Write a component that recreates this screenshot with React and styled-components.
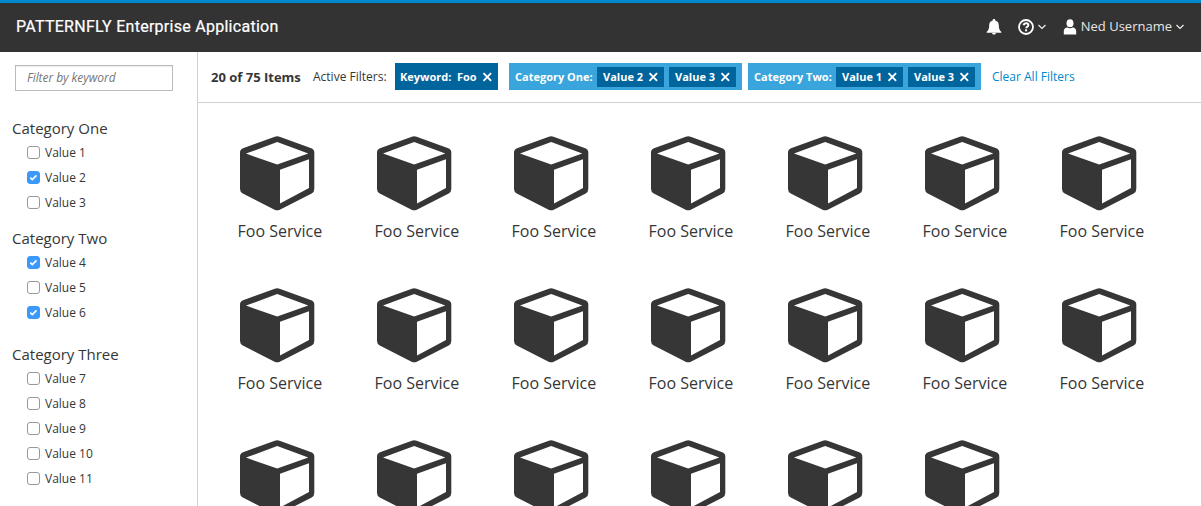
import React from "react";
import styled, { createGlobalStyle } from "styled-components";

const GlobalStyle = createGlobalStyle`
  *, *::before, *::after { box-sizing: border-box; }
  body {
    margin: 0;
    background: #fff;
    color: #363636;
    font-family: "Open Sans", "Noto Sans", sans-serif;
    font-size: 12px;
    overflow: hidden;
  }
`;

const Page = styled.div`
  display: flex;
  flex-direction: column;
  height: 506px;
  overflow: hidden;
`;

const Masthead = styled.header`
  display: flex;
  align-items: center;
  justify-content: space-between;
  flex: none;
  height: 52px;
  padding: 0 17px 2px 16px;
  border-top: 3px solid #0088ce;
  background: #333;
  color: #fff;
`;

const Brand = styled.h1`
  margin: 0;
  font: 400 16px/20px Roboto, sans-serif;
  letter-spacing: 0.27px;
  -webkit-text-stroke: 0.2px #fff;
  white-space: nowrap;
`;

const Utilities = styled.div`
  display: flex;
  align-items: center;
`;

const UtilityButton = styled.button`
  display: flex;
  align-items: center;
  gap: ${(p) => p.$gap || 0}px;
  margin: 0 0 0 ${(p) => p.$space || 0}px;
  padding: 0;
  border: 0;
  background: none;
  color: #e6e6e6;
  font: 13px/18px "Open Sans", sans-serif;
  white-space: nowrap;
`;

const UserName = styled.span`
  padding-bottom: 1px;
  line-height: 17px;
`;

const Body = styled.div`
  display: flex;
  flex: 1;
  min-height: 0;
`;

const Sidebar = styled.aside`
  flex: none;
  width: 198px;
  padding: 13px 0 0 12px;
  border-right: 1px solid #d1d1d1;
`;

const KeywordInput = styled.input`
  display: block;
  width: 158px;
  height: 26px;
  margin: 0 0 27px 3px;
  padding: 0 11px 1px;
  border: 1px solid #bbb;
  border-radius: 0;
  box-shadow: inset 0 1px 1px rgba(0, 0, 0, 0.075);
  font: 12px/18px "Open Sans", sans-serif;
  letter-spacing: -0.06px;
  &::placeholder {
    color: #767676;
    font-style: italic;
  }
`;

const Category = styled.section`
  margin-bottom: ${(p) => p.$after}px;
`;

const CategoryTitle = styled.h2`
  margin: 0;
  padding-bottom: 2px;
  font-size: 15px;
  font-weight: 400;
  line-height: 20px;
`;

const Option = styled.label`
  display: flex;
  align-items: center;
  gap: 5px;
  height: 25px;
  padding-left: 15px;
  line-height: 18px;
`;

const CheckBox = styled.span`
  display: flex;
  align-items: center;
  justify-content: center;
  width: 13px;
  height: 13px;
  border: 1px solid ${(p) => (p.$checked ? "#3b99fc" : "#999")};
  border-radius: 3px;
  background: ${(p) => (p.$checked ? "#3b99fc" : "#fff")};
`;

const Main = styled.main`
  flex: 1;
  min-width: 0;
`;

const Toolbar = styled.div`
  display: flex;
  align-items: center;
  height: 51px;
  padding: 0 0 1px 13px;
  border-bottom: 1px solid #d1d1d1;
  white-space: nowrap;
`;

const ResultCount = styled.strong`
  width: 102px;
  font-size: 13px;
  font-weight: 700;
`;

const FiltersLabel = styled.span`
  width: 82px;
`;

const FilterGroup = styled.div`
  display: flex;
  align-items: center;
  width: ${(p) => p.$width}px;
  height: 27px;
  margin-right: ${(p) => p.$after}px;
  padding-left: ${(p) => (p.$solid ? 5 : 6)}px;
  background: ${(p) => (p.$solid ? "#00659c" : "#39a5dc")};
  color: #fff;
  font-size: 11px;
  font-weight: 700;
`;

const FilterName = styled.span`
  width: ${(p) => p.$width}px;
`;

const FilterChip = styled.span`
  display: flex;
  align-items: center;
  justify-content: space-between;
  width: 67px;
  height: 20px;
  margin-right: 5px;
  padding: 0 6px;
  background: #00659c;
`;

const FilterValue = styled.span`
  width: 25px;
`;

const ClearLink = styled.a`
  color: #0088ce;
`;

const ServiceGrid = styled.div`
  display: grid;
  grid-template-columns: repeat(7, 137px);
  grid-auto-rows: 152px;
  padding: 33px 0 0 39.5px;
`;

const ServiceCard = styled.div`
  display: flex;
  flex-direction: column;
  align-items: flex-start;
`;

const ServiceIcon = styled.svg`
  display: block;
  margin-left: 2.5px;
`;

const ServiceName = styled.span`
  margin-top: 8px;
  font-size: 16px;
  line-height: 24px;
  white-space: nowrap;
`;

const BellIcon = () => (
  <svg width="16" height="16" viewBox="0 0 16 16" fill="#fff">
    <path d="M8 0c.9 0 1.300.5 1.300 1.400 2.200.6 3.500 2.200 3.500 4.500 0 3.600.8 5.500 2.500 6.900v1H.7v-1c1.700-1.400 2.500-3.300 2.500-6.900 0-2.300 1.300-3.900 3.500-4.500C6.700.5 7.100 0 8 0zM6 14h4c-.3 1-1 1.500-2 1.500S6.300 15 6 14z" />
  </svg>
);

const HelpIcon = () => (
  <svg width="16" height="16" viewBox="0 0 16 16" fill="none" stroke="#fff">
    <circle cx="8" cy="8" r="7" strokeWidth="1.8" />
    <path d="M5.600 6.300c.3-1.400 1.200-2 2.500-2 1.400 0 2.300.8 2.300 1.900 0 1.600-2.200 1.600-2.200 3.100" strokeWidth="1.900" />
    <path d="M7.100 11.300h2" strokeWidth="2" />
  </svg>
);

const UserIcon = () => (
  <svg width="14" height="16" viewBox="0 0 14 16" fill="#fff">
    <ellipse cx="7" cy="4.200" rx="3.500" ry="3.900" />
    <path d="M.8 15.500v-3c0-2.300 1.300-3.700 3.500-3.900 1.600 1 3.800 1 5.400 0 2.200.2 3.500 1.600 3.500 3.900v3z" />
  </svg>
);

const Caret = () => (
  <svg width="8" height="6" viewBox="0 0 8 6" fill="none" stroke="#f0f0f0" strokeWidth="1.200">
    <path d="M.5 1L4 4.500 7.500 1" />
  </svg>
);

const CloseIcon = () => (
  <svg width="10" height="10" viewBox="0 0 10 10" fill="none" stroke="#fff" strokeWidth="1.900">
    <path d="M1.500 1.200l7.600 7.600M9.100 1.200L1.500 8.800" />
  </svg>
);

const CheckMark = () => (
  <svg width="9" height="9" viewBox="0 0 9 9" fill="none" stroke="#fff" strokeWidth="1.700">
    <path d="M1.300 4.600l2 2L7.500 2.300" />
  </svg>
);

const CubeIcon = () => (
  <ServiceIcon width="75" height="75" viewBox="0 0 75 75">
    <path
      fill="#363636"
      fillRule="evenodd"
      d="M34.800.8Q37.200-.3 39.600.8L71.300 12.200Q74.300 13.400 74.300 16.500V53Q74.300 56 71.700 57.500L39.800 73.700Q37.200 75 34.600 73.700L2.800 57.500Q0 56 0 53V16.500Q0 13.400 3 12.200ZM37.200 6L6 17.600 37.200 28.600 68.300 17.600ZM40 33.800V67.500L69 52V23.200Z"
    />
  </ServiceIcon>
);

const categories = [
  { title: "Category One", after: 13, options: [["Value 1"], ["Value 2", true], ["Value 3"]] },
  { title: "Category Two", after: 19, options: [["Value 4", true], ["Value 5"], ["Value 6", true]] },
  {
    title: "Category Three",
    after: 0,
    options: [["Value 7"], ["Value 8"], ["Value 9"], ["Value 10"], ["Value 11"]],
  },
];

const filterGroups = [
  { name: "Category One:", values: ["Value 2", "Value 3"], after: 6 },
  { name: "Category Two:", values: ["Value 1", "Value 3"], after: 11 },
];

const services = Array.from({ length: 20 }, () => "Foo Service");

export default function App() {
  return (
    <Page>
      <GlobalStyle />
      <Masthead>
        <Brand>PATTERNFLY Enterprise Application</Brand>
        <Utilities>
          <UtilityButton aria-label="Notifications"><BellIcon /></UtilityButton>
          <UtilityButton aria-label="Help" $space={16} $gap={4}><HelpIcon /><Caret /></UtilityButton>
          <UtilityButton $space={17} $gap={4}><UserIcon /><UserName>Ned Username</UserName><Caret /></UtilityButton>
        </Utilities>
      </Masthead>
      <Body>
        <Sidebar>
          <KeywordInput placeholder="Filter by keyword" />
          {categories.map((category) => (
            <Category key={category.title} $after={category.after}>
              <CategoryTitle>{category.title}</CategoryTitle>
              {category.options.map(([label, checked]) => (
                <Option key={label}>
                  <CheckBox $checked={checked}>{checked && <CheckMark />}</CheckBox>
                  {label}
                </Option>
              ))}
            </Category>
          ))}
        </Sidebar>
        <Main>
          <Toolbar>
            <ResultCount>20 of 75 Items</ResultCount>
            <FiltersLabel>Active Filters:</FiltersLabel>
            <FilterGroup $solid $width={103} $after={11}>
              <FilterName $width={57}>Keyword:</FilterName>
              <FilterName $width={25}>Foo</FilterName>
              <CloseIcon />
            </FilterGroup>
            {filterGroups.map((group) => (
              <FilterGroup key={group.name} $width={233} $after={group.after}>
                <FilterName $width={82}>{group.name}</FilterName>
                {group.values.map((value) => (
                  <FilterChip key={value}>
                    <FilterValue>{value}</FilterValue>
                    <CloseIcon />
                  </FilterChip>
                ))}
              </FilterGroup>
            ))}
            <ClearLink>Clear All Filters</ClearLink>
          </Toolbar>
          <ServiceGrid>
            {services.map((name, index) => (
              <ServiceCard key={index}>
                <CubeIcon />
                <ServiceName>{name}</ServiceName>
              </ServiceCard>
            ))}
          </ServiceGrid>
        </Main>
      </Body>
    </Page>
  );
}
